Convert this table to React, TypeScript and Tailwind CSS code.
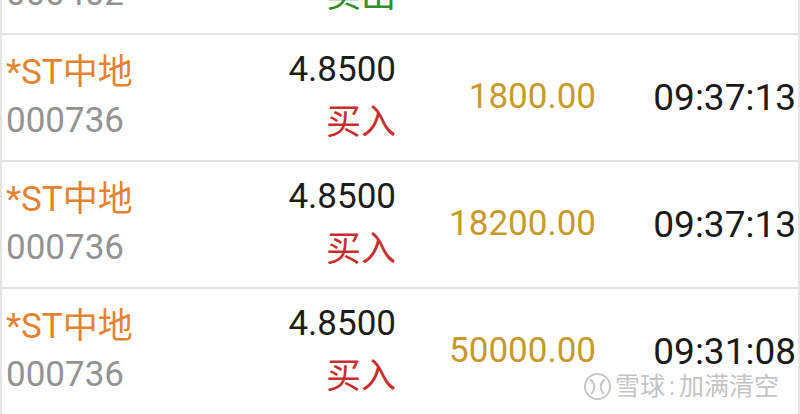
const rows = [
  { name: "深振业A", code: "000402", price: "4.8600", side: "卖出", amount: "2000.00", time: "09:38:02" },
  { name: "*ST中地", code: "000736", price: "4.8500", side: "买入", amount: "1800.00", time: "09:37:13" },
  { name: "*ST中地", code: "000736", price: "4.8500", side: "买入", amount: "18200.00", time: "09:37:13" },
  { name: "*ST中地", code: "000736", price: "4.8500", side: "买入", amount: "50000.00", time: "09:31:08" },
];

function Logo() {
  return (
    <svg width="29" height="29" viewBox="0 0 30 30" fill="none" stroke="#c4c4c4" strokeWidth="2" strokeLinecap="round">
      <circle cx="15" cy="15" r="13" />
      <path d="M8 8 Q15 15 9 22" />
      <path d="M22 8 Q15 15 21 22" />
    </svg>
  );
}

export default function App() {
  return (
    <div
      className="relative w-[800px] h-[414px] overflow-hidden bg-white"
      style={{ fontFamily: 'Roboto, "Noto Sans CJK SC", sans-serif' }}
    >
      <div className="mt-[-92px] border-x-2 border-[#e4e4e4]">
        {rows.map((r, i) => (
          <div
            key={i}
            className="grid grid-cols-[194px_200px_200px_200px] pr-[2px] h-[127px] border-b-2 border-[#e2e2e2]"
          >
            <div className="pl-[4px] pt-[14px] leading-[48px] text-[35px]">
              <div className="text-[#e3822f] whitespace-nowrap">{r.name}</div>
              <div className="text-[#939393]">{r.code}</div>
            </div>
            <div className="text-right pt-[11px] leading-[48px] text-[35px]">
              <div className="text-[#1c1c1c]">{r.price}</div>
              <div className={r.side === "买入" ? "mt-[5px] text-[#c62f2f]" : "mt-[5px] text-[#2f8f2f]"}>
                {r.side}
              </div>
            </div>
            <div className="flex items-center justify-end text-[35px] text-[#c9992e]">{r.amount}</div>
            <div className="flex items-center justify-end text-[37px] text-[#1a1a1a]">{r.time}</div>
          </div>
        ))}
      </div>

      <div className="absolute left-[583px] top-[372px] flex items-center text-[25px] leading-[29px] text-[#c4c4c4]">
        <Logo />
        <span className="ml-[3px]">雪球</span>
        <span className="w-[14px] text-center">:</span>
        <span>加满清空</span>
      </div>
    </div>
  );
}
